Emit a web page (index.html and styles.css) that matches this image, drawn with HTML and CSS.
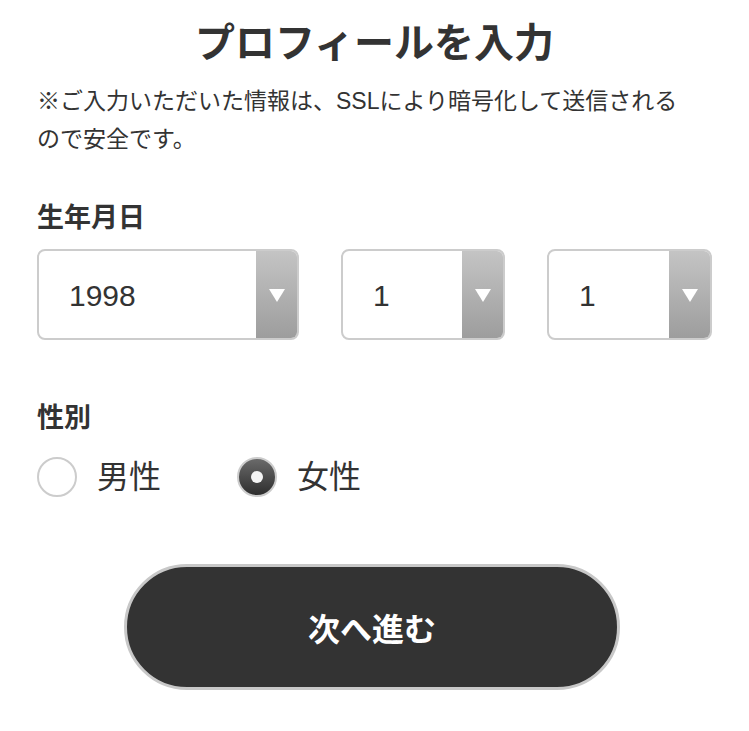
FILE: index.html
```html
<!DOCTYPE html>
<html lang="ja">
<head>
    <meta charset="UTF-8">
    <meta name="viewport" content="width=device-width, initial-scale=1.0">
    <title>プロフィールを入力</title>
    <link rel="stylesheet" href="styles.css">
</head>
<body>

<div class="container">
    <h1 class="title">プロフィールを入力</h1>
    <p class="note">※ご入力いただいた情報は、SSLにより暗号化して送信されるので安全です。</p>

    <div class="field-label">生年月日</div>
    <div class="birth-row">
        <div class="select-box">
            <span class="select-value">1998</span>
            <span class="select-arrow"></span>
        </div>
        <div class="select-box">
            <span class="select-value">1</span>
            <span class="select-arrow"></span>
        </div>
        <div class="select-box">
            <span class="select-value">1</span>
            <span class="select-arrow"></span>
        </div>
    </div>

    <div class="field-label gender-label">性別</div>
    <div class="gender-row">
        <label class="radio-option">
            <span class="radio"></span>
            <span class="radio-text">男性</span>
        </label>
        <label class="radio-option">
            <span class="radio checked"></span>
            <span class="radio-text">女性</span>
        </label>
    </div>

    <button class="next-button" type="button">次へ進む</button>
</div>

</body>
</html>
```

FILE: styles.css
```css
body {
    margin: 0;
    background: #fff;
    color: #333;
    font-family: "Liberation Sans", "Noto Sans CJK JP", sans-serif;
}
.container {
    padding: 18px 37px 40px;
}
.title {
    margin: 0;
    font-size: 40px;
    line-height: 50px;
    font-weight: bold;
    text-align: center;
}
.note {
    max-width: 655px;
    margin: 14px 0 0;
    font-size: 23px;
    line-height: 38px;
}
.field-label {
    margin-top: 42px;
    font-size: 27px;
    line-height: 36px;
    font-weight: bold;
}
.birth-row {
    display: flex;
    justify-content: space-between;
    margin-top: 13px;
}
.select-box {
    display: flex;
    height: 91px;
    box-sizing: border-box;
    border: 2px solid #ccc;
    border-radius: 8px;
    overflow: hidden;
    background: #fff;
}
.select-box:nth-child(1) { width: 262px; }
.select-box:nth-child(2) { width: 164px; }
.select-box:nth-child(3) { width: 165px; }
.select-value {
    flex: 1;
    display: flex;
    align-items: center;
    padding-left: 30px;
    padding-top: 2px;
    font-size: 30px;
}
.select-arrow {
    width: 41px;
    display: flex;
    align-items: center;
    justify-content: center;
    padding-top: 2px;
    background: linear-gradient(#c4c4c4, #9d9d9d);
}
.select-arrow::after {
    content: "";
    width: 0;
    height: 0;
    border-left: 8px solid transparent;
    border-right: 8px solid transparent;
    border-top: 13px solid #fff;
}
.gender-label {
    margin-top: 60px;
}
.gender-row {
    display: grid;
    grid-template-columns: 200px auto;
    margin-top: 21px;
}
.radio-option {
    display: flex;
    align-items: center;
}
.radio {
    width: 40px;
    height: 40px;
    box-sizing: border-box;
    border: 2px solid #ccc;
    border-radius: 50%;
    background: #fff;
    display: flex;
    align-items: center;
    justify-content: center;
}
.radio.checked {
    background: linear-gradient(#6a6a6a, #2e2e2e);
}
.radio.checked::after {
    content: "";
    width: 12px;
    height: 12px;
    border-radius: 50%;
    background: #f4f4f4;
}
.radio-text {
    margin-left: 20px;
    font-size: 32px;
    line-height: 40px;
}
.next-button {
    display: block;
    width: 496px;
    height: 126px;
    margin: 67px 0 0 87px;
    border: 3px solid #c8c8c8;
    border-radius: 63px;
    background: #333;
    color: #fff;
    font-family: inherit;
    font-size: 32px;
    font-weight: bold;
    cursor: pointer;
}
```
